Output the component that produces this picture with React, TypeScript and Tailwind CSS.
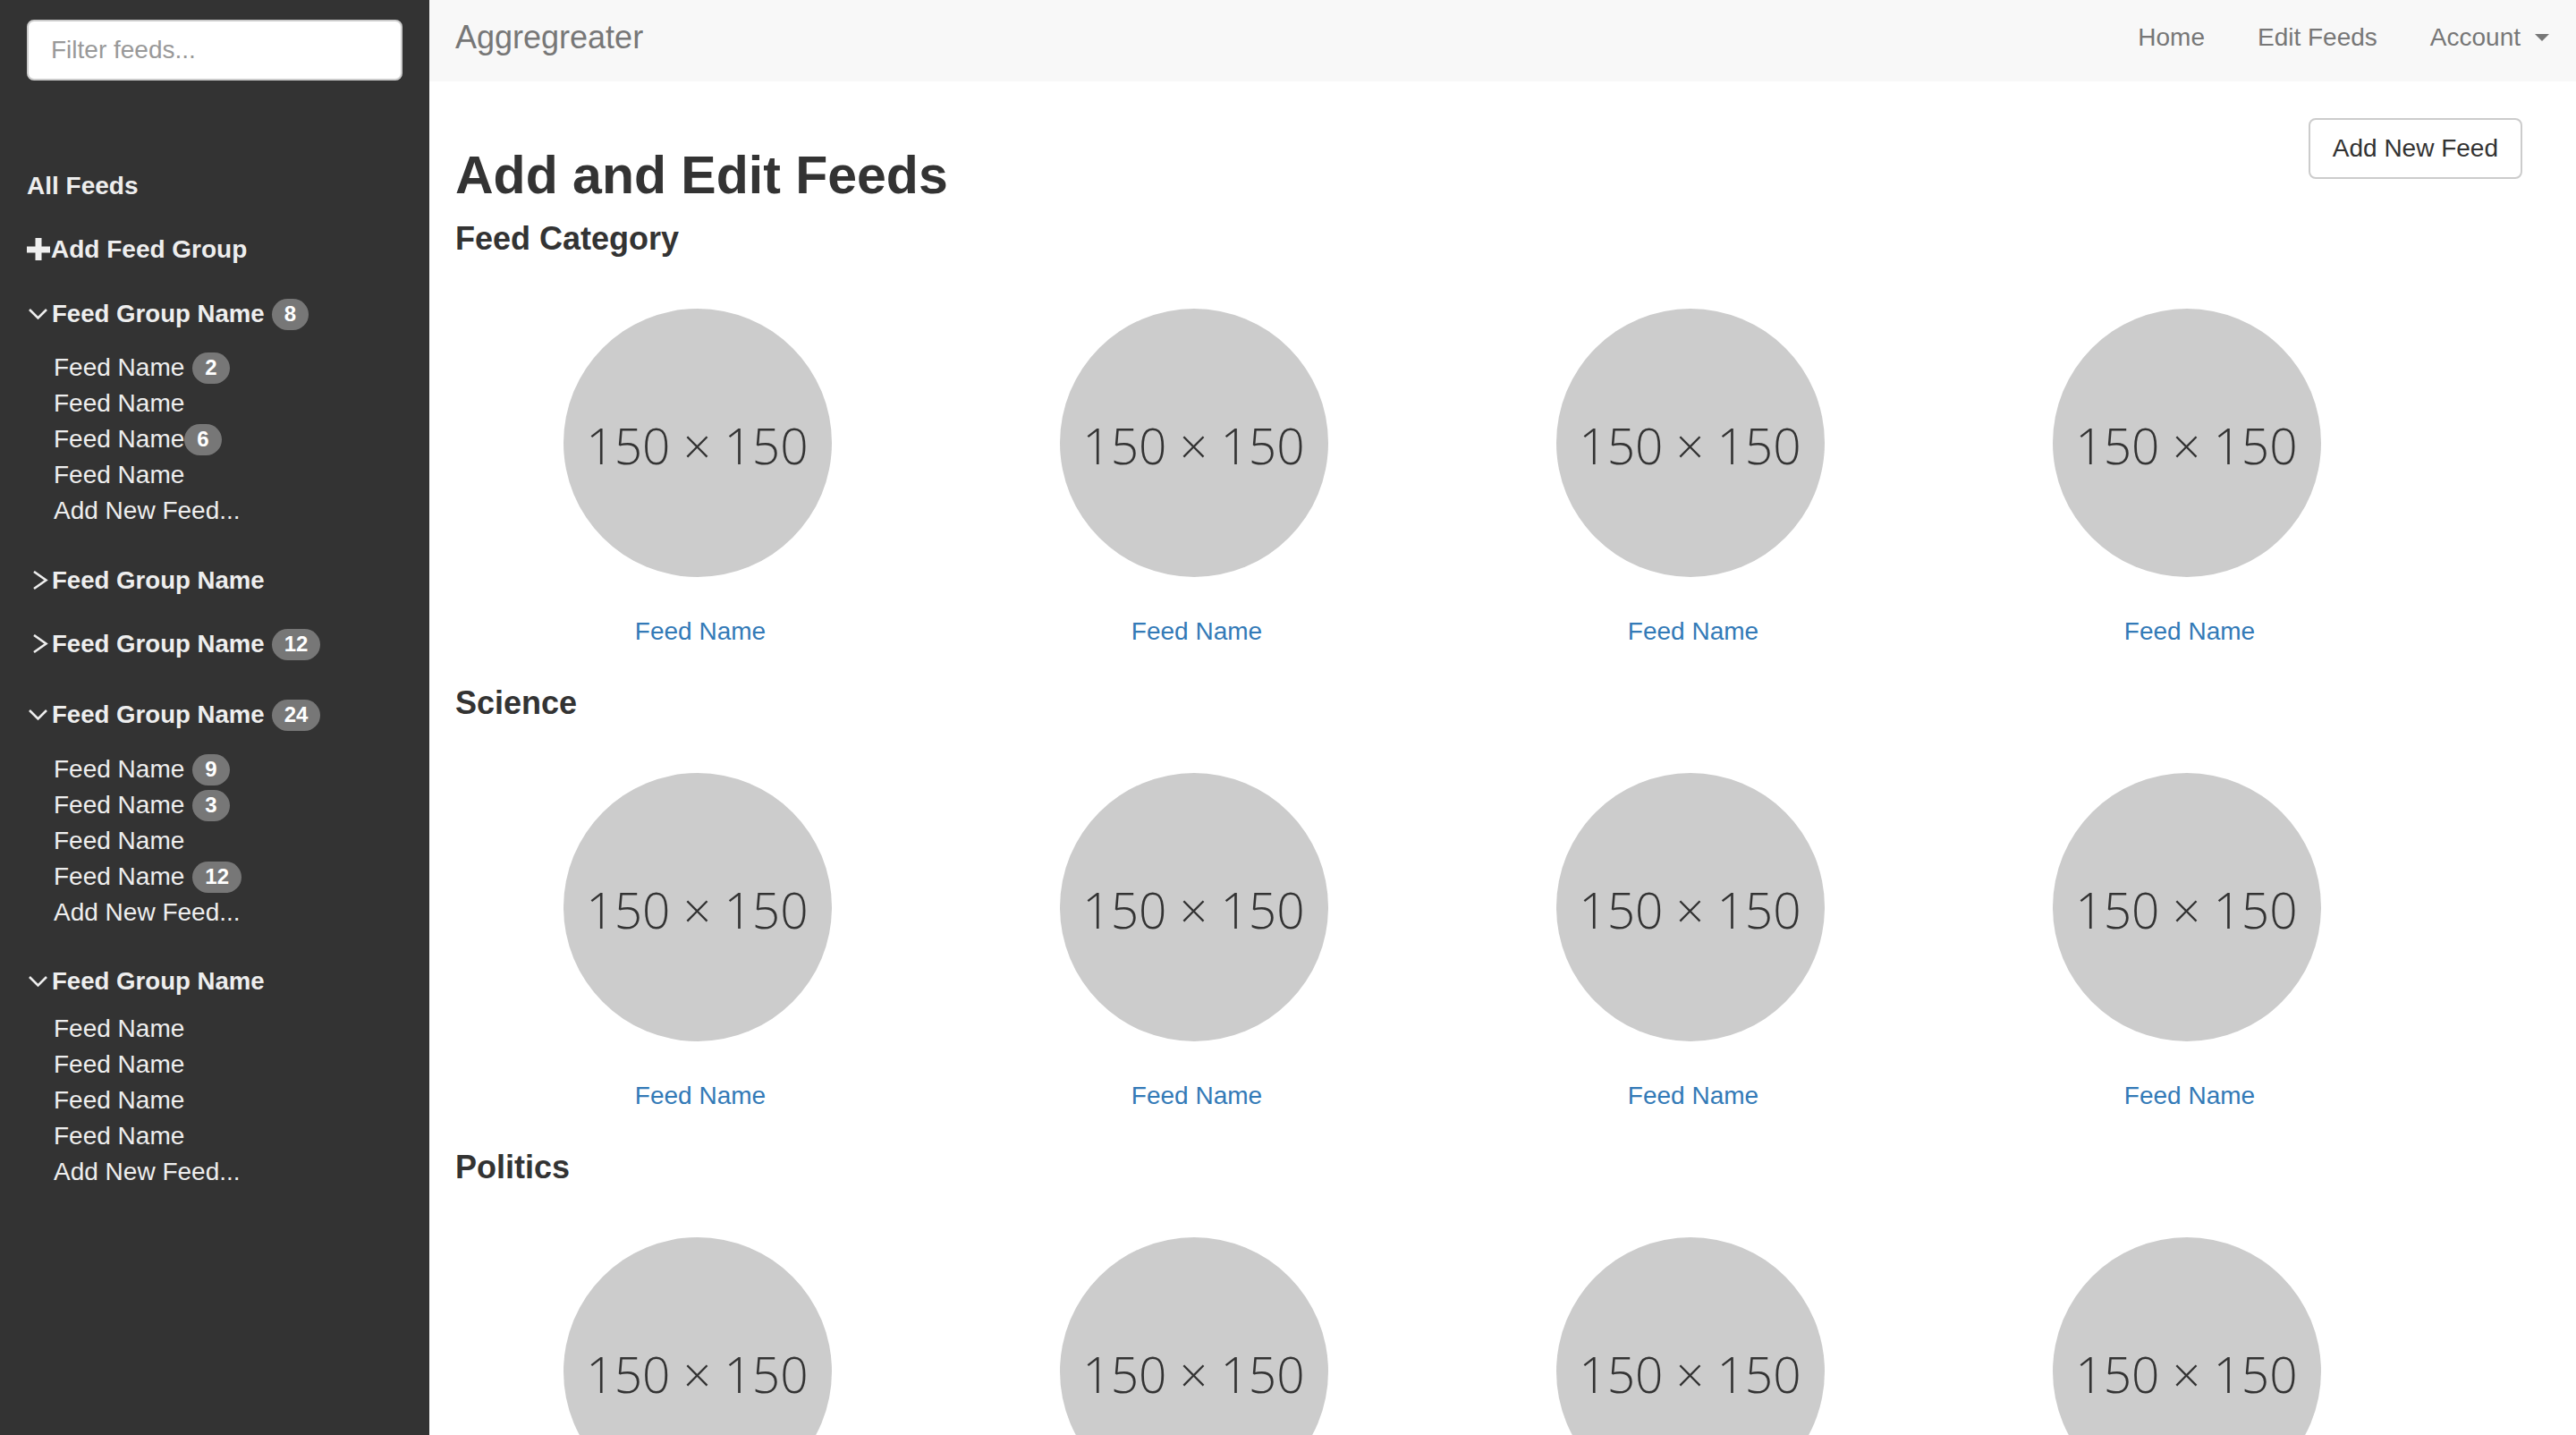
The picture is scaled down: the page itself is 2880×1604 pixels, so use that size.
import React from "react";

type Item = { n: string; b?: string; tight?: boolean };
type Group = { badge?: string; open: boolean; mt: number; itemsMt?: number; items?: Item[] };

const groups: Group[] = [
  {
    badge: "8",
    open: true,
    mt: 32,
    itemsMt: 20,
    items: [
      { n: "Feed Name", b: "2" },
      { n: "Feed Name" },
      { n: "Feed Name", b: "6", tight: true },
      { n: "Feed Name" },
      { n: "Add New Feed..." },
    ],
  },
  { open: false, mt: 38 },
  { badge: "12", open: false, mt: 31 },
  {
    badge: "24",
    open: true,
    mt: 39,
    itemsMt: 21,
    items: [
      { n: "Feed Name", b: "9" },
      { n: "Feed Name", b: "3" },
      { n: "Feed Name" },
      { n: "Feed Name", b: "12" },
      { n: "Add New Feed..." },
    ],
  },
  {
    open: true,
    mt: 37,
    itemsMt: 13,
    items: [
      { n: "Feed Name" },
      { n: "Feed Name" },
      { n: "Feed Name" },
      { n: "Feed Name" },
      { n: "Add New Feed..." },
    ],
  },
];

function Badge({ children, tight }: { children: React.ReactNode; tight?: boolean }) {
  return (
    <span
      className={`inline-flex h-[35px] items-center justify-center rounded-full bg-[#777] px-[14px] text-[24px] font-bold leading-none text-white ${
        tight ? "ml-0" : "ml-[9px]"
      }`}
    >
      {children}
    </span>
  );
}

function ChevronDown() {
  return (
    <svg width="27" height="14" viewBox="0 0 27 14" className="shrink-0">
      <polyline points="3,2 12.5,11.5 22,2" fill="none" stroke="#eeeeee" strokeWidth="2.6" />
    </svg>
  );
}

function ChevronRight() {
  return (
    <svg width="27" height="22" viewBox="0 0 27 22" className="shrink-0">
      <polyline points="8,1 21.5,10.5 8,20" fill="none" stroke="#eeeeee" strokeWidth="2.6" />
    </svg>
  );
}

function Plus() {
  return (
    <svg width="27" height="26" viewBox="0 0 27 26" className="shrink-0">
      <rect x="0" y="9.5" width="26" height="7" fill="#eeeeee" />
      <rect x="9.5" y="0" width="7" height="25" fill="#eeeeee" />
    </svg>
  );
}

function Sidebar() {
  return (
    <aside className="flex w-[480px] shrink-0 flex-col bg-[#333333] px-[30px] text-[28px] leading-[40px] text-[#eeeeee]">
      <div className="mt-[22px] flex h-[68px] w-[420px] items-center rounded-[8px] border-2 border-[#cccccc] bg-white pl-[25px] text-[28px] text-[#999999]">
        Filter feeds...
      </div>
      <div className="mt-[98px] font-bold">All Feeds</div>
      <div className="mt-[31px] flex items-center font-bold">
        <Plus />
        <span>Add Feed Group</span>
      </div>
      {groups.map((g, i) => (
        <div key={i} style={{ marginTop: g.mt }} className="flex flex-col">
          <div className="flex h-[40px] items-center text-[27.6px] font-bold">
            {g.open ? <ChevronDown /> : <ChevronRight />}
            <span className="ml-[1px]">Feed Group Name</span>
            {g.badge && (
              <span className="ml-[8px] inline-flex h-[35px] items-center justify-center rounded-full bg-[#777] px-[14px] text-[24px] font-bold leading-none text-white">
                {g.badge}
              </span>
            )}
          </div>
          {g.open && g.items && (
            <div style={{ marginTop: g.itemsMt }} className="flex flex-col pl-[30px]">
              {g.items.map((it, j) => (
                <div key={j} className="flex h-[40px] items-center">
                  <span>{it.n}</span>
                  {it.b && <Badge tight={it.tight}>{it.b}</Badge>}
                </div>
              ))}
            </div>
          )}
        </div>
      ))}
    </aside>
  );
}

function Circle() {
  return (
    <div className="flex h-[300px] w-[300px] items-center justify-center rounded-full bg-[#cccccc] pt-[6px] font-['Open_Sans',sans-serif] text-[55px] font-light text-[#333333]">
      150 × 150
    </div>
  );
}

function Section({ title }: { title: string }) {
  return (
    <section className="mb-[40px]">
      <h4 className="h-[40px] text-[36px] font-semibold leading-[40px] text-[#333333]">{title}</h4>
      <div className="-ml-[7px] mt-[58px] grid grid-cols-[repeat(4,555px)]">
        {[0, 1, 2, 3].map((k) => (
          <div key={k} className="flex flex-col items-center">
            <Circle />
            <a className="mt-[41px] pl-[7px] text-[28px] leading-[40px] text-[#337ab7]">Feed Name</a>
          </div>
        ))}
      </div>
    </section>
  );
}

export default function App() {
  return (
    <div className="flex h-[1604px] w-full overflow-hidden bg-white font-['Liberation_Sans',Arial,sans-serif]">
      <Sidebar />
      <div className="flex min-w-0 flex-1 flex-col">
        <header className="flex h-[91px] shrink-0 items-start justify-between bg-[#f8f8f8] pl-[29px] pr-[30px] text-[#777777]">
          <div className="mt-[22px] text-[36px] leading-[40px]">Aggregreater</div>
          <nav className="mt-[22px] flex items-center gap-[59px] text-[28px] leading-[40px]">
            <span>Home</span>
            <span>Edit Feeds</span>
            <span className="flex items-center">
              Account
              <span className="ml-[16px] h-0 w-0 border-x-[8px] border-t-[8px] border-x-transparent border-t-[#777777]" />
            </span>
          </nav>
        </header>
        <main className="pl-[29px] pr-[60px] pt-[41px]">
          <div className="flex items-start justify-between">
            <h2 className="mt-[31px] text-[59px] font-semibold leading-[66px] text-[#333333]">Add and Edit Feeds</h2>
            <button className="flex h-[68px] items-center rounded-[8px] border-2 border-[#cccccc] bg-white px-[25px] text-[28px] text-[#333333]">
              Add New Feed
            </button>
          </div>
          <div className="mt-[18px]">
            <Section title="Feed Category" />
            <Section title="Science" />
            <Section title="Politics" />
          </div>
        </main>
      </div>
    </div>
  );
}
